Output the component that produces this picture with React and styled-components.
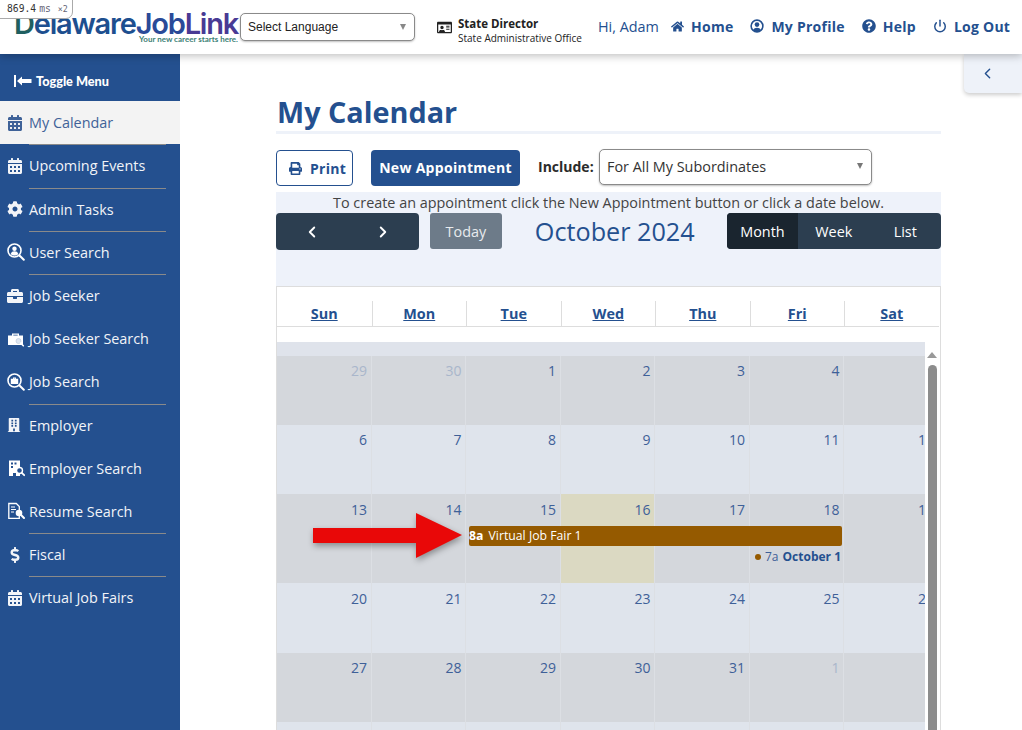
import React from "react";
import styled, { createGlobalStyle } from "styled-components";
import {
  FaCalendarAlt,
  FaCog,
  FaBriefcase,
  FaBuilding,
  FaDollarSign,
  FaHome,
  FaQuestionCircle,
  FaPrint,
  FaRegIdCard,
} from "react-icons/fa";
import { ChevronLeft, ChevronRight, Power } from "lucide-react";

const BLUE = "#24508f";

const GlobalStyle = createGlobalStyle`
  html, body { margin: 0; padding: 0; background: #fff; }
  body { font-family: "Open Sans", "Liberation Sans", sans-serif; }
  * { box-sizing: border-box; }
`;

const ToggleIcon = () => (
  <svg width="18" height="14" viewBox="0 0 18 14" fill="#fff">
    <rect x="0" y="1" width="2" height="12" />
    <path d="M3 7l5-4.500V5h9.500v4H8v2.500z" />
  </svg>
);

const GlassIcon = ({ inner }) => (
  <svg width="18" height="18" viewBox="0 0 18 18" fill="none">
    <circle cx="7.500" cy="7.500" r="6.500" stroke="#fff" strokeWidth="1.600" />
    <path d="M12.500 12.500l4.300 4.300" stroke="#fff" strokeWidth="2" strokeLinecap="round" />
    {inner === "user" ? (
      <g fill="#fff">
        <circle cx="7.500" cy="5.700" r="2.200" />
        <path d="M3.700 11c.6-2 2-2.700 3.800-2.700s3.200.7 3.800 2.700c-1 1-2.300 1.500-3.800 1.500S4.700 12 3.700 11z" />
      </g>
    ) : (
      <path d="M6 4.500h3v1.200h2.200v5.300H3.800V5.700H6zm.9.900v.3h1.200v-.3z" fill="#fff" />
    )}
  </svg>
);

const CaseSearchIcon = () => (
  <svg width="18" height="18" viewBox="0 0 18 18" fill="#fff">
    <path d="M1 5.500h4V3.500h7v2h4v9.500H1zM6.300 5.500h4.400V4.800H6.300z" />
    <circle cx="11.500" cy="11" r="2.500" fill="#dfe6f0" stroke="#c3cfe0" strokeWidth="0.800" />
    <path d="M13.500 13l2.800 2.800" stroke="#fff" strokeWidth="1.600" strokeLinecap="round" />
  </svg>
);

const BuildingSearchIcon = () => (
  <svg width="18" height="18" viewBox="0 0 18 18" fill="#fff">
    <path d="M2 1.500h11V17H9v-3H6v3H2z" />
    <g fill={BLUE}>
      <rect x="4" y="3.500" width="2" height="2" />
      <rect x="7.500" y="3.500" width="2" height="2" />
      <rect x="4" y="7" width="2" height="2" />
    </g>
    <circle cx="12.500" cy="11.500" r="3" fill={BLUE} stroke="#fff" strokeWidth="1.400" />
    <path d="M14.800 13.800l2.400 2.400" stroke="#fff" strokeWidth="1.800" strokeLinecap="round" />
  </svg>
);

const ResumeSearchIcon = () => (
  <svg width="18" height="18" viewBox="0 0 18 18" fill="none">
    <path d="M1.800 1.500h7.500l3 3v11.800H1.800z" stroke="#fff" strokeWidth="1.300" />
    <path d="M4 5h4M4 7.500h5M4 10h3" stroke="#fff" strokeWidth="1" />
    <circle cx="12" cy="11" r="3.300" fill="#fff" />
    <path d="M14.300 13.300l2.700 2.700" stroke="#fff" strokeWidth="2" strokeLinecap="round" />
  </svg>
);

const ProfileIcon = () => (
  <svg width="14" height="14" viewBox="0 0 15 15" fill="none">
    <circle cx="7.500" cy="7.500" r="6.300" stroke={BLUE} strokeWidth="1.700" />
    <circle cx="7.500" cy="6" r="2.500" fill={BLUE} />
    <path d="M3.300 12c.7-1.900 2.300-2.700 4.200-2.700s3.500.8 4.200 2.700c-1 1-2.600 1.600-4.200 1.600S4.300 13 3.300 12z" fill={BLUE} />
  </svg>
);

const menu = [
  { label: "My Calendar", icon: <FaCalendarAlt />, active: true, divider: true },
  { label: "Upcoming Events", icon: <FaCalendarAlt />, divider: true },
  { label: "Admin Tasks", icon: <FaCog />, divider: true },
  { label: "User Search", icon: <GlassIcon inner="user" />, divider: true },
  { label: "Job Seeker", icon: <FaBriefcase /> },
  { label: "Job Seeker Search", icon: <CaseSearchIcon /> },
  { label: "Job Search", icon: <GlassIcon inner="case" />, divider: true },
  { label: "Employer", icon: <FaBuilding size={14} /> },
  { label: "Employer Search", icon: <BuildingSearchIcon /> },
  { label: "Resume Search", icon: <ResumeSearchIcon />, divider: true },
  { label: "Fiscal", icon: <FaDollarSign />, divider: true },
  { label: "Virtual Job Fairs", icon: <FaCalendarAlt /> },
];

const weeks = [
  { height: 69, top: 5, dark: true, days: [[29, 1], [30, 1], [1], [2], [3], [4], [5]] },
  { height: 69, top: 5, days: [[6], [7], [8], [9], [10], [11], [12]] },
  { height: 89, top: 6, dark: true, event: true, days: [[13], [14], [15], [16, 0, 1], [17], [18], [19]] },
  { height: 70, top: 6, days: [[20], [21], [22], [23], [24], [25], [26]] },
  { height: 69, top: 5, dark: true, days: [[27], [28], [29], [30], [31], [1, 1], [2, 1]] },
  { height: 69, top: 5, days: [[3, 1], [4, 1], [5, 1], [6, 1], [7, 1], [8, 1], [9, 1]] },
];

const App = () => {
  return (
    <Page>
      <GlobalStyle />
      <TimingBadge>
        869.4<small>ms</small><em>×2</em>
      </TimingBadge>
      <Header>
        <Logo>
          <LogoName>
            <span>D</span>elaware<b>Job</b><i>Link</i>
          </LogoName>
          <LogoTag>Your new career starts here.</LogoTag>
        </Logo>
        <LanguageSelect>Select Language</LanguageSelect>
        <Role>
          <FaRegIdCard />
          <div>
            <strong>State Director</strong>
            <small>State Administrative Office</small>
          </div>
        </Role>
        <Greeting>Hi, Adam</Greeting>
        <TopLink><FaHome size={13} />Home</TopLink>
        <TopLink><ProfileIcon />My Profile</TopLink>
        <TopLink><FaQuestionCircle />Help</TopLink>
        <TopLink><Power size={14} strokeWidth={2.5} />Log Out</TopLink>
      </Header>
      <CollapseTab>
        <ChevronLeft size={17} strokeWidth={2} />
      </CollapseTab>
      <Body>
        <Sidebar>
          <ToggleRow>
            <ToggleIcon />
            Toggle Menu
          </ToggleRow>
          {menu.map((item) => (
            <MenuItem key={item.label} $active={item.active}>
              <MenuIcon>{item.icon}</MenuIcon>
              {item.label}
              {item.divider && <MenuDivider />}
            </MenuItem>
          ))}
        </Sidebar>
        <Main>
          <Title>My Calendar</Title>
          <Actions>
            <PrintButton><FaPrint />Print</PrintButton>
            <NewButton>New Appointment</NewButton>
            <IncludeLabel>Include:</IncludeLabel>
            <IncludeSelect>For All My Subordinates</IncludeSelect>
          </Actions>
          <Panel>
            <Hint>To create an appointment click the New Appointment button or click a date below.</Hint>
            <Toolbar>
              <NavGroup>
                <ChevronLeft size={18} strokeWidth={2.5} />
                <ChevronRight size={18} strokeWidth={2.5} />
              </NavGroup>
              <TodayButton>Today</TodayButton>
              <MonthTitle>October 2024</MonthTitle>
              <ViewGroup>
                <ViewButton $active>Month</ViewButton>
                <ViewButton>Week</ViewButton>
                <ViewButton>List</ViewButton>
              </ViewGroup>
            </Toolbar>
          </Panel>
          <Table>
            <HeadRow>
              {["Sun", "Mon", "Tue", "Wed", "Thu", "Fri", "Sat"].map((d) => (
                <HeadCell key={d}><a>{d}</a></HeadCell>
              ))}
            </HeadRow>
            <Scroller>
              <Viewport>
                <AllDayRow />
                {weeks.map((week, i) => (
                  <Week key={i} $height={week.height} $dark={week.dark}>
                    {week.days.map(([n, muted, today], j) => (
                      <Day key={j} $col={j + 1} $top={week.top} $muted={muted} $today={today}>{n}</Day>
                    ))}
                    {week.event && (
                      <>
                        <EventBar><b>8a</b> Virtual Job Fair 1</EventBar>
                        <DotEvent><i />7a <b>October 1</b></DotEvent>
                      </>
                    )}
                  </Week>
                ))}
              </Viewport>
              <Scrollbar>
                <ScrollUp />
                <ScrollThumb />
              </Scrollbar>
            </Scroller>
          </Table>
          <PointerArrow viewBox="0 0 160 56" width="160" height="56">
            <path d="M2 20h103V5l46 22-46 23V35H2z" fill="#e90808" />
          </PointerArrow>
        </Main>
      </Body>
    </Page>
  );
};

const Page = styled.div`
  position: relative;
  height: 730px;
  overflow: hidden;
  display: flex;
  flex-direction: column;
`;
const TimingBadge = styled.div`
  position: absolute;
  z-index: 5;
  top: -1px;
  left: -1px;
  width: 74px;
  height: 20px;
  padding: 3px 0 0 7px;
  background: #fff;
  border: 1px solid #aaa;
  border-radius: 0 0 7px 0;
  font: 9.700px "DejaVu Sans Mono", monospace;
  color: #333;
  white-space: nowrap;
  small { font-size: 9.700px; color: #667; margin-left: 3px; }
  em { font-style: normal; font-size: 8.300px; color: #667; margin-left: 7px; }
`;
const Header = styled.header`
  position: relative;
  z-index: 2;
  flex: none;
  height: 54px;
  display: flex;
  align-items: center;
  padding-left: 14px;
  background: #fff;
  box-shadow: 0 2px 8px rgba(0, 0, 0, 0.25);
`;
const Logo = styled.div`
  flex: none;
  width: 226px;
  height: 44px;
  padding-top: 5px;
  display: flex;
  flex-direction: column;
  align-items: flex-end;
`;
const LogoName = styled.div`
  width: 100%;
  font: 600 29px/28px Inter, sans-serif;
  letter-spacing: -1.200px;
  color: #1d4f8f;
  white-space: nowrap;
  span { color: #1f5f60; }
  b { font-weight: 600; color: #2a4a98; }
  i { font-style: normal; color: #483a94; }
`;
const LogoTag = styled.div`
  margin: -3px 2px 0 0;
  font: 700 8px/9px Lato, sans-serif;
  color: #3d7f75;
`;
const LanguageSelect = styled.div`
  position: relative;
  flex: none;
  width: 175px;
  height: 28px;
  padding-left: 7px;
  display: flex;
  align-items: center;
  background: #fff;
  border: 1px solid #8a8a8a;
  border-radius: 5px;
  box-shadow: 0 1px 2px rgba(0, 0, 0, 0.25);
  font: 12px "Liberation Sans", sans-serif;
  color: #222;
  &::after {
    content: "";
    position: absolute;
    right: 8px;
    top: 10px;
    border: 3px solid transparent;
    border-top: 6px solid #888;
  }
`;
const Role = styled.div`
  flex: none;
  width: 161px;
  margin: 8px 0 0 22px;
  display: flex;
  align-items: flex-start;
  gap: 6px;
  color: #222;
  svg { font-size: 15px; flex: none; margin-top: 3px; }
  strong { display: block; font-size: 11.500px; line-height: 14px; font-weight: 700; }
  small { display: block; font-size: 10px; line-height: 14px; white-space: nowrap; }
`;
const Greeting = styled.span`
  flex: none;
  width: 73px;
  margin-bottom: 2px;
  font-size: 14.400px;
  color: ${BLUE};
  white-space: nowrap;
`;
const TopLink = styled.a`
  flex: none;
  display: inline-flex;
  align-items: center;
  gap: 7px;
  margin: 0 17px 2px 0;
  font-size: 14px;
  font-weight: 700;
  letter-spacing: 0.250px;
  color: ${BLUE};
  white-space: nowrap;
  svg { font-size: 14px; flex: none; }
`;
const CollapseTab = styled.div`
  position: absolute;
  z-index: 1;
  top: 54px;
  right: 0;
  width: 58px;
  height: 39px;
  display: flex;
  align-items: center;
  justify-content: center;
  padding-right: 12px;
  background: #eef2f9;
  border-radius: 0 0 0 5px;
  box-shadow: 0 2px 4px rgba(0, 0, 0, 0.2);
  color: ${BLUE};
`;
const Body = styled.div`
  flex: 1;
  display: flex;
  min-height: 0;
`;
const Sidebar = styled.nav`
  flex: none;
  width: 180px;
  background: ${BLUE};
`;
const ToggleRow = styled.div`
  height: 47.200px;
  padding: 6px 0 0 14px;
  display: flex;
  align-items: center;
  gap: 4px;
  font: 900 12.700px Lato, sans-serif;
  color: #fff;
`;
const MenuItem = styled.a`
  position: relative;
  height: 43.200px;
  padding-left: 7px;
  display: flex;
  align-items: center;
  font-size: 14.400px;
  font-weight: ${(p) => (p.$active ? 400 : 500)};
  color: ${(p) => (p.$active ? "#3f6298" : "#f2f4f8")};
  background: ${(p) => (p.$active ? "#f3f3f3" : "transparent")};
`;
const MenuIcon = styled.span`
  width: 22px;
  flex: none;
  display: flex;
  align-items: center;
  font-size: 16px;
`;
const MenuDivider = styled.span`
  position: absolute;
  left: 29px;
  right: 14px;
  bottom: -1px;
  height: 1px;
  background: #8a8a8a;
`;
const Main = styled.main`
  position: relative;
  flex: none;
  width: 665px;
  margin-left: 96px;
  padding-top: 38px;
`;
const Title = styled.h1`
  margin: 0;
  height: 42px;
  padding-left: 1px;
  font-size: 28.800px;
  line-height: 40px;
  font-weight: 700;
  color: ${BLUE};
  border-bottom: 3px solid #eef2f9;
`;
const Actions = styled.div`
  margin-top: 16px;
  height: 42px;
  display: flex;
  align-items: flex-start;
`;
const PrintButton = styled.button`
  width: 77px;
  height: 36px;
  padding: 0 0 0 12px;
  display: flex;
  align-items: center;
  gap: 8px;
  background: #fff;
  border: 1px solid ${BLUE};
  border-radius: 4px;
  font: 700 14px "Open Sans", sans-serif;
  letter-spacing: 0.300px;
  color: ${BLUE};
  svg { font-size: 13px; }
`;
const NewButton = styled.button`
  margin-left: 18px;
  width: 149px;
  height: 36px;
  padding: 0 0 2px;
  background: ${BLUE};
  border: 0;
  border-radius: 4px;
  font: 700 14px "Open Sans", sans-serif;
  letter-spacing: 0.300px;
  color: #fff;
`;
const IncludeLabel = styled.span`
  margin-left: 18px;
  width: 61px;
  line-height: 34px;
  font-size: 14px;
  font-weight: 700;
  color: #2b2b2b;
`;
const IncludeSelect = styled.div`
  position: relative;
  width: 273px;
  height: 36px;
  margin-top: -1px;
  padding: 0 0 2px 7px;
  display: flex;
  align-items: center;
  background: #fff;
  border: 1px solid #8a8a8a;
  border-radius: 5px;
  box-shadow: 0 1px 2px rgba(0, 0, 0, 0.25);
  font-size: 14.400px;
  color: #333;
  &::after {
    content: "";
    position: absolute;
    right: 8px;
    top: 13px;
    border: 3px solid transparent;
    border-top: 6px solid #777;
  }
`;
const Panel = styled.div`
  height: 95px;
  background: #eef2fa;
`;
const Hint = styled.div`
  height: 21px;
  padding-top: 1px;
  text-align: center;
  font-size: 14.400px;
  line-height: 19px;
  color: #444;
`;
const Toolbar = styled.div`
  display: flex;
  align-items: flex-start;
`;
const NavGroup = styled.div`
  width: 143px;
  height: 37px;
  display: flex;
  align-items: center;
  justify-content: space-between;
  padding: 0 27px;
  background: #2c3e50;
  border-radius: 4px;
  color: #fff;
`;
const TodayButton = styled.div`
  margin-left: 11px;
  width: 72px;
  height: 36px;
  display: flex;
  align-items: center;
  justify-content: center;
  background: #6d7b89;
  border-radius: 3px;
  font-size: 14.400px;
  color: #e8ebee;
`;
const MonthTitle = styled.div`
  margin-left: 33px;
  width: 192px;
  font-size: 25.200px;
  line-height: 37px;
  color: ${BLUE};
`;
const ViewGroup = styled.div`
  display: flex;
  height: 36px;
  background: #2c3e50;
  border-radius: 4px;
  overflow: hidden;
`;
const ViewButton = styled.div`
  width: 71.500px;
  display: flex;
  align-items: center;
  justify-content: center;
  font-size: 14.400px;
  color: #fff;
  background: ${(p) => (p.$active ? "#1a252f" : "transparent")};
`;
const Table = styled.div`
  border: 1px solid #ddd;
  border-bottom: 0;
  margin-top: -1px;
  background: #fff;
  padding-top: 14px;
`;
const HeadRow = styled.div`
  display: grid;
  grid-template-columns: repeat(7, 94.500px);
  height: 26px;
  margin-right: 1px;
  border-bottom: 1px solid #ddd;
`;
const HeadCell = styled.div`
  text-align: center;
  font-size: 14.400px;
  font-weight: 700;
  line-height: 25px;
  color: ${BLUE};
  & + & { border-left: 1px solid #ddd; }
  a { text-decoration: underline; }
`;
const Scroller = styled.div`
  display: flex;
  margin-top: 15px;
`;
const Viewport = styled.div`
  width: 648px;
  overflow: hidden;
`;
const AllDayRow = styled.div`
  height: 14px;
  background: #dfe3eb;
`;
const Week = styled.div`
  width: 663px;
  height: ${(p) => p.$height}px;
  display: grid;
  grid-template-columns: repeat(7, 94.500px);
  grid-template-rows: 32px 20px 21px 1fr;
  background: ${(p) => (p.$dark ? "#d4d7dc" : "#dfe4ec")};
`;
const Day = styled.div`
  grid-column: ${(p) => p.$col};
  grid-row: 1 / 5;
  padding: ${(p) => p.$top}px 3.500px 0 0;
  text-align: right;
  font-size: 14px;
  line-height: 20px;
  border-right: 1px solid #dcdfe4;
  color: ${(p) => (p.$muted ? "#a9b6cb" : "#3e6098")};
  background: ${(p) => (p.$today ? "#dbd9c2" : "transparent")};
`;
const EventBar = styled.div`
  grid-column: 3 / 7;
  grid-row: 2;
  z-index: 1;
  margin: 0 2px 0 3px;
  background: #955a00;
  border-radius: 2px;
  font-size: 12.240px;
  line-height: 20px;
  color: #fff;
  white-space: nowrap;
  b { margin-right: 2px; }
`;
const DotEvent = styled.div`
  grid-column: 6;
  grid-row: 3;
  z-index: 1;
  margin-right: 3px;
  display: flex;
  align-items: center;
  justify-content: flex-end;
  gap: 4px;
  font-size: 12px;
  line-height: 22px;
  color: #3e6098;
  white-space: nowrap;
  i { width: 6px; height: 6px; border-radius: 50%; background: #955a00; }
  b { color: ${BLUE}; }
`;
const Scrollbar = styled.div`
  width: 14px;
  display: flex;
  flex-direction: column;
  align-items: center;
  background: #fff;
`;
const ScrollUp = styled.div`
  margin-top: 10px;
  border: 5px solid transparent;
  border-top: 0;
  border-bottom: 6px solid #999;
`;
const ScrollThumb = styled.div`
  margin-top: 7px;
  width: 9px;
  height: 380px;
  border-radius: 5px;
  background: #8c8c8c;
`;
const PointerArrow = styled.svg`
  position: absolute;
  z-index: 2;
  left: 35px;
  top: 454px;
  overflow: visible;
  filter: drop-shadow(1px 3px 3px rgba(0, 0, 0, 0.35));
`;

export default App;
